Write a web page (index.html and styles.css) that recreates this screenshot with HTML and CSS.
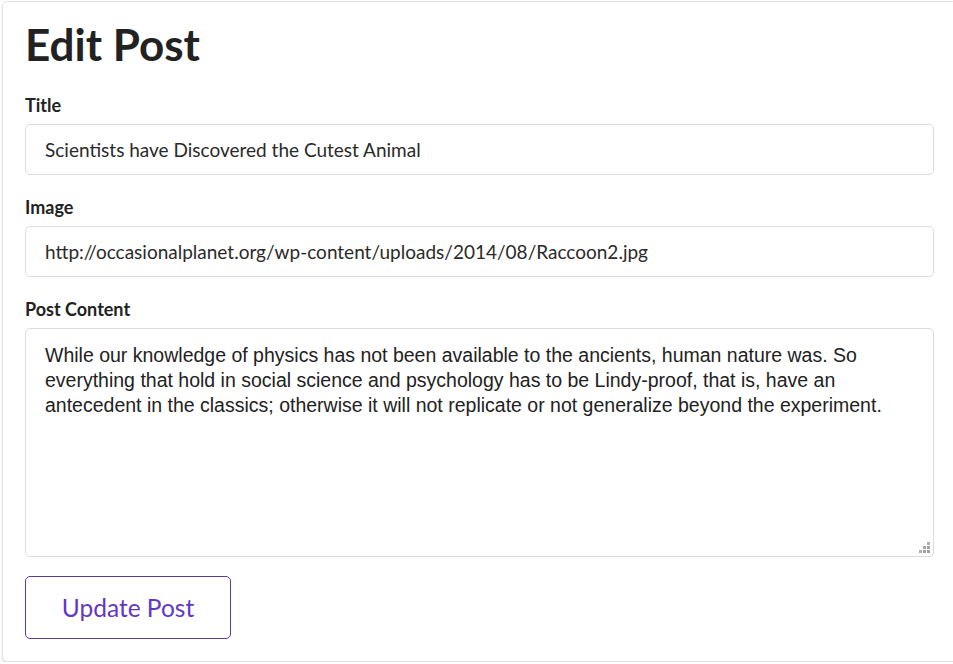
FILE: index.html
```html
<!DOCTYPE html>
<html>
<head>
<meta charset="utf-8">
<link rel="stylesheet" href="styles.css">
</head>
<body>
<div class="card">
  <h1 class="heading">Edit Post</h1>
  <form class="form">
    <label class="field">
      <span class="label">Title</span>
      <input class="input" type="text" value="Scientists have Discovered the Cutest Animal">
    </label>
    <label class="field">
      <span class="label">Image</span>
      <input class="input" type="text" value="http://occasionalplanet.org/wp-content/uploads/2014/08/Raccoon2.jpg">
    </label>
    <label class="field">
      <span class="label">Post Content</span>
      <span class="textarea-wrap">
        <textarea class="textarea">While our knowledge of physics has not been available to the ancients, human nature was. So everything that hold in social science and psychology has to be Lindy-proof, that is, have an antecedent in the classics; otherwise it will not replicate or not generalize beyond the experiment.</textarea>
        <svg class="grip" width="12" height="12" viewBox="0 0 12 12" aria-hidden="true">
          <rect x="8" y="0" width="3" height="3" fill="#b0b0b0"/>
          <rect x="4" y="4" width="3" height="3" fill="#a8a8a8"/>
          <rect x="8" y="4" width="3" height="3" fill="#a0a0a0"/>
          <rect x="0" y="8" width="3" height="3" fill="#b0b0b0"/>
          <rect x="4" y="8" width="3" height="3" fill="#a0a0a0"/>
          <rect x="8" y="8" width="3" height="3" fill="#a0a0a0"/>
        </svg>
      </span>
    </label>
    <div class="actions">
      <button class="button" type="button">Update Post</button>
    </div>
  </form>
</div>
</body>
</html>
```

FILE: styles.css
```css
html, body {
  margin: 0;
  padding: 0;
  overflow: hidden;
  background: #fff;
}
body {
  padding: 1px 0 0 2px;
  font-family: Lato, "Liberation Sans", sans-serif;
  color: #222;
}
.card {
  width: 955px;
  height: 661px;
  box-sizing: border-box;
  border: 1px solid #e2e2e2;
  border-radius: 5px;
  box-shadow: 0 2px 2px rgba(0,0,0,0.12);
  padding: 15px 22px 0 22px;
  background: #fff;
}
.heading {
  margin: 0;
  font-size: 44px;
  font-weight: 700;
  line-height: 54px;
  color: #222;
}
.form {
  display: flex;
  flex-direction: column;
  gap: 21px;
  margin-top: 23px;
}
.field {
  display: flex;
  flex-direction: column;
  gap: 8px;
}
.label {
  font-size: 18px;
  font-weight: 700;
  line-height: 22px;
  color: #222;
}
.input {
  box-sizing: border-box;
  height: 51px;
  width: 909px;
  border: 1px solid #dcdcdc;
  border-radius: 5px;
  padding: 0 19px;
  font-family: Lato, "Liberation Sans", sans-serif;
  font-size: 19px;
  color: #2a2a2a;
  background: #fff;
  outline: none;
}
.textarea-wrap {
  position: relative;
  display: block;
  width: 909px;
  height: 229px;
}
.textarea {
  display: block;
  box-sizing: border-box;
  height: 229px;
  width: 909px;
  border: 1px solid #dcdcdc;
  border-radius: 5px;
  padding: 14px 19px;
  font-family: "Liberation Sans", Arial, sans-serif;
  font-size: 19.5px;
  line-height: 25px;
  color: #222;
  resize: none;
  outline: none;
}
.grip {
  position: absolute;
  right: 3px;
  bottom: 3px;
}
.actions {
  display: flex;
  margin-top: -2px;
}
.button {
  width: 206px;
  height: 63px;
  border: 1px solid #5b3a9e;
  border-radius: 5px;
  background: #fff;
  color: #6237c2;
  font-family: Lato, "Liberation Sans", sans-serif;
  font-size: 24.5px;
  padding: 0;
  cursor: pointer;
}
```
